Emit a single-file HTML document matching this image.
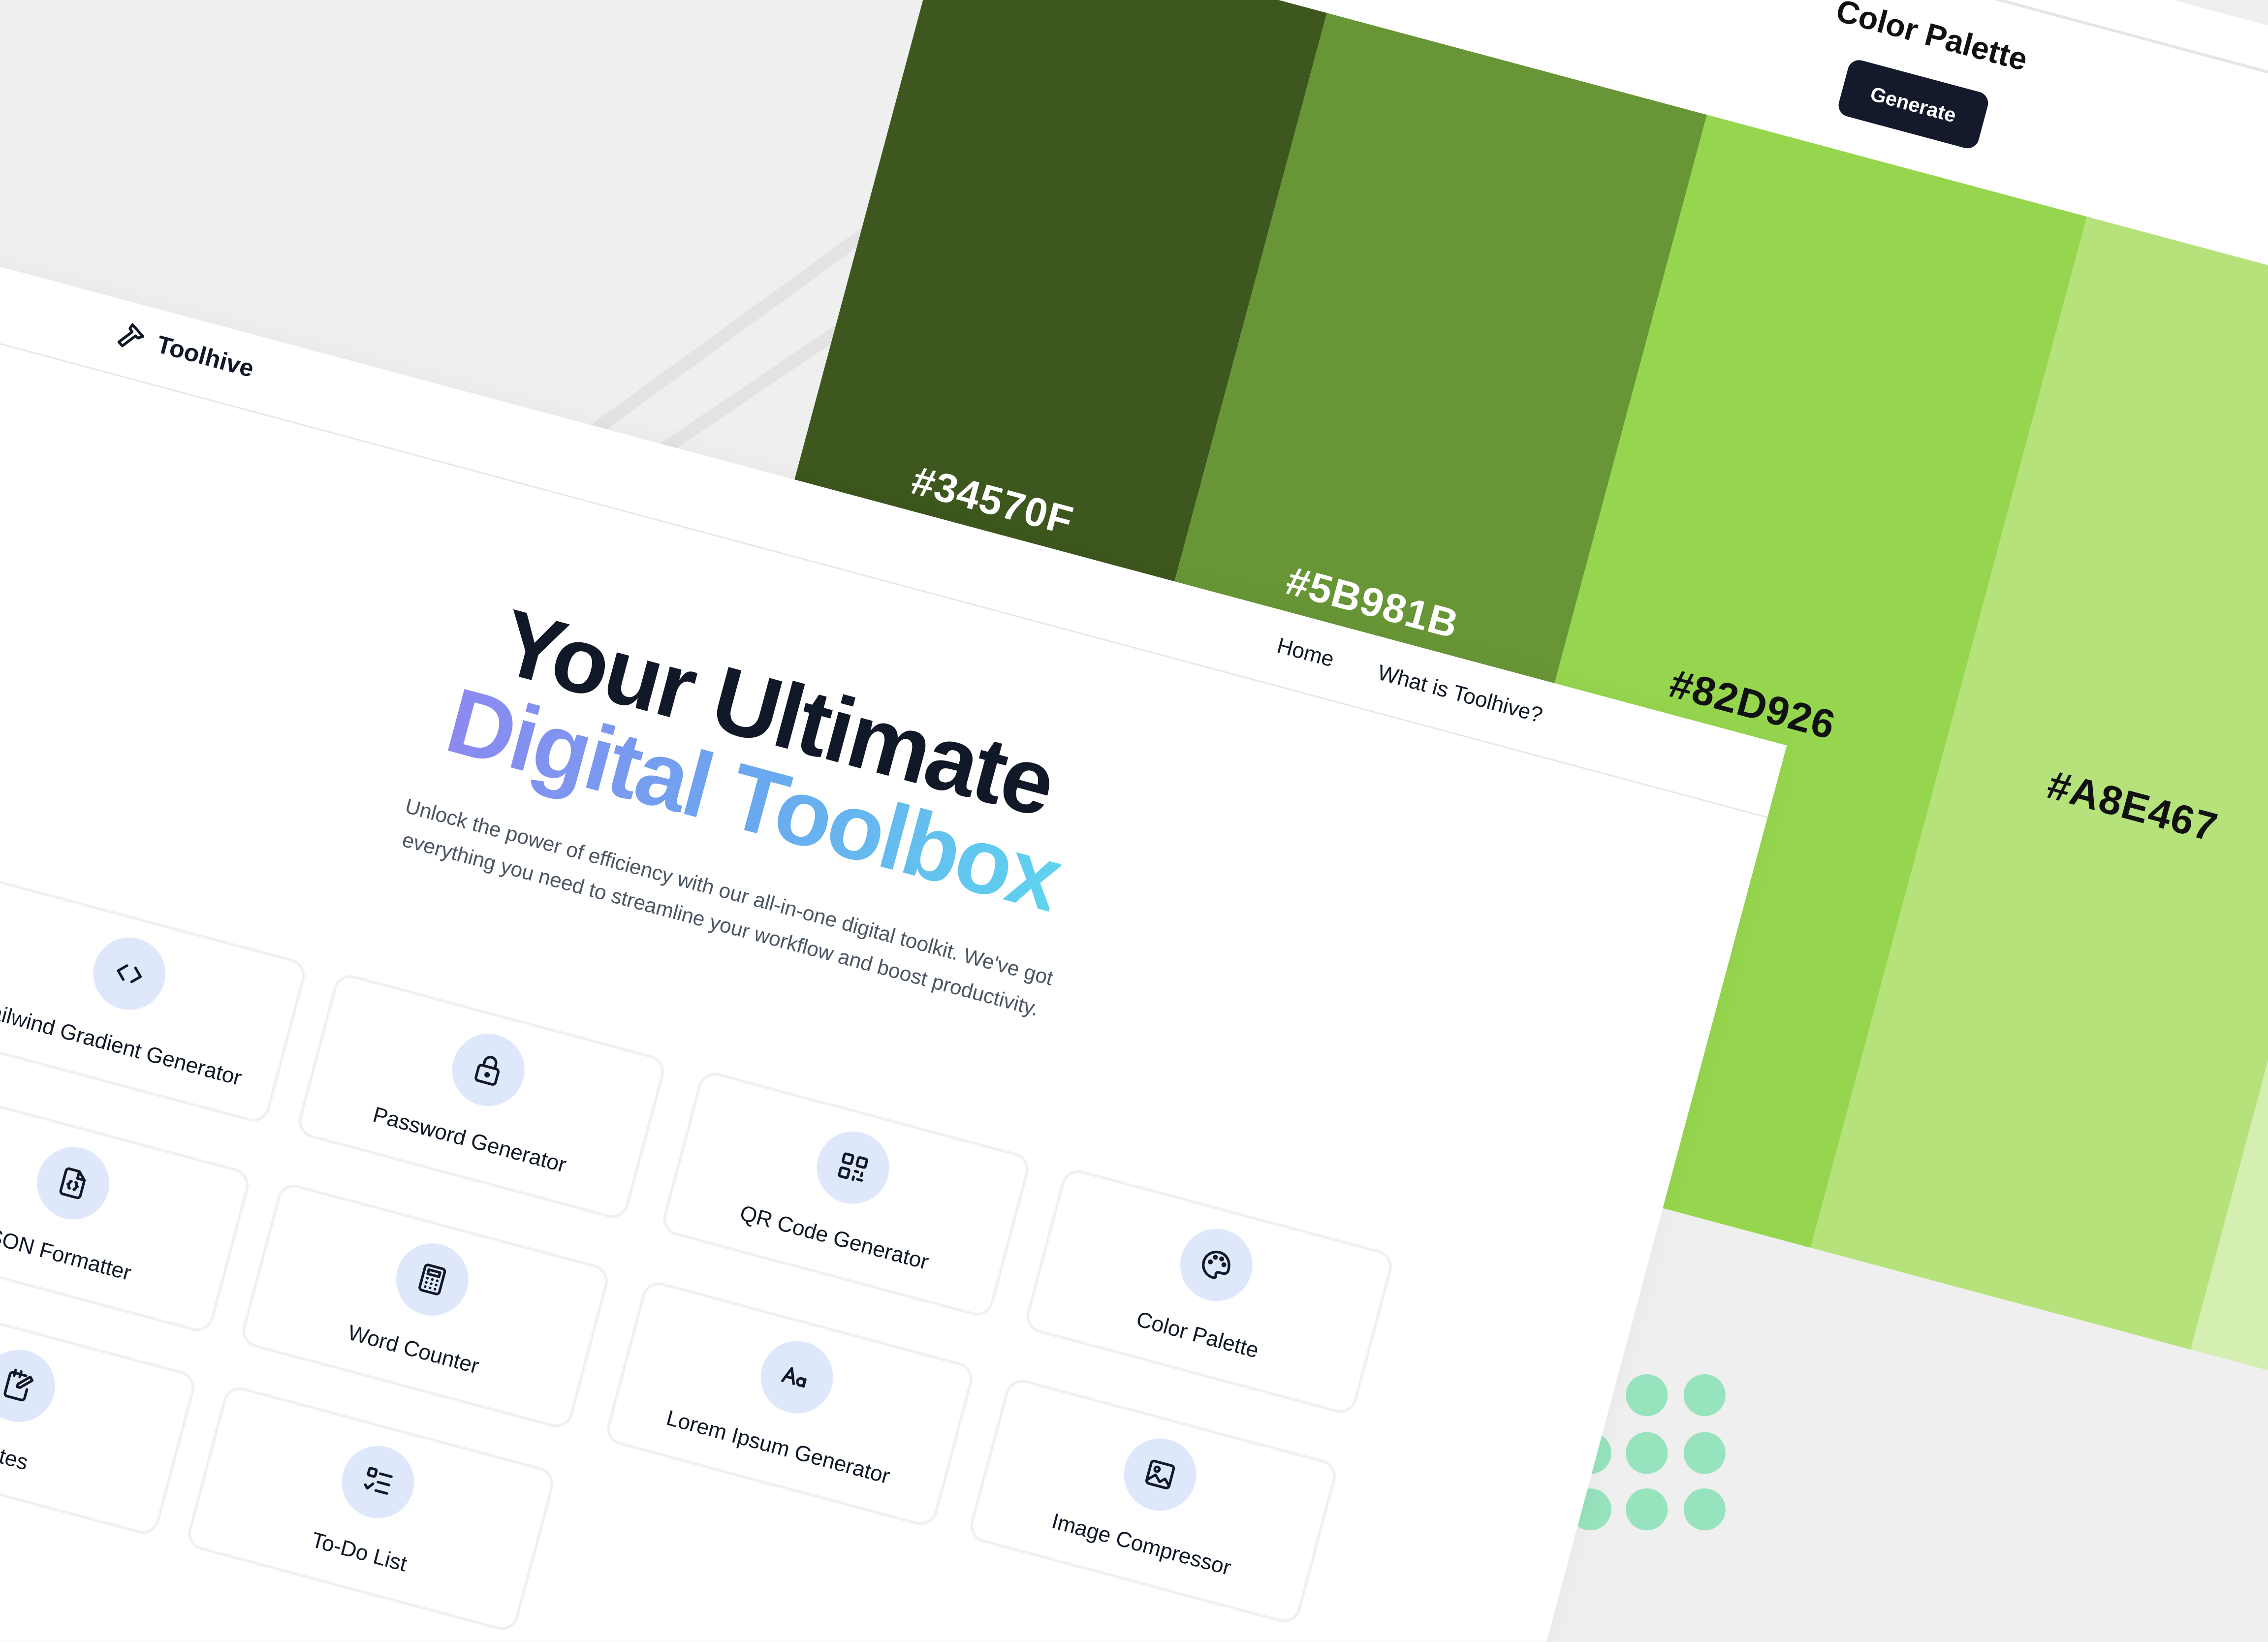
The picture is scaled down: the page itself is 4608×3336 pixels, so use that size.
<!DOCTYPE html>
<html><head><meta charset="utf-8"><style>
*{margin:0;padding:0;box-sizing:border-box}
html,body{width:4608px;height:3336px;overflow:hidden;background:#efefef}
#stage{position:absolute;left:0;top:0;width:1568px;height:1135px;transform:scale(2.93878);transform-origin:0 0;overflow:hidden;background:#efefef;font-family:"Liberation Sans",sans-serif}
.back{position:absolute;left:695.6px;top:-216.5px;width:1360px;height:898px;transform:rotate(15deg);transform-origin:0 0;background:#fff}
.col{position:absolute;top:160px;height:738px;width:272px}
.hex{position:absolute;left:0;width:272px;top:370px;text-align:center;font-weight:700;font-size:28px;letter-spacing:0.5px}
.front{position:absolute;left:-117px;top:153px;width:1400px;height:1150px;transform:rotate(15deg);transform-origin:0 0;background:#fff;box-shadow:0 0 20px rgba(0,0,0,.04)}
.hdr{position:absolute;left:0;top:0;width:1400px;height:52px;border-bottom:1.5px solid #e6e6ea}
.card{position:absolute;width:236px;height:116px;border:2.5px solid #f1f1f3;border-radius:12px;background:#fff}
.ic{position:absolute;left:91px;top:12px;width:50px;height:50px;border-radius:50%;background:#dfe8fb;display:flex;align-items:center;justify-content:center}
.ic svg{width:24px;height:24px;fill:none;stroke:#111827;stroke-width:1.8;stroke-linecap:round;stroke-linejoin:round}
.lbl{position:absolute;left:-20px;right:-20px;top:79px;text-align:center;font-size:15px;font-weight:500;color:#111827;white-space:nowrap}
.dot{position:absolute;width:29px;height:29px;border-radius:50%;background:#97e3bd}
</style></head><body><div id="stage">
<svg style="position:absolute;left:0;top:0" width="1568" height="1135"><g stroke="#e3e3e3" stroke-width="9"><line x1="380" y1="320" x2="600" y2="160"/><line x1="430" y1="330" x2="600" y2="215"/></g></svg>
<div class="dot" style="left:1085px;top:990px"></div><div class="dot" style="left:1085px;top:1029px"></div>
<div class="dot" style="left:1124px;top:950px"></div><div class="dot" style="left:1164px;top:950px"></div>
<div class="dot" style="left:1124px;top:990px"></div><div class="dot" style="left:1164px;top:990px"></div>
<div class="dot" style="left:1124px;top:1029px"></div><div class="dot" style="left:1164px;top:1029px"></div>
<div class="back">
<div style="position:absolute;left:0;top:30px;width:1360px;height:1.5px;background:#e6e6ea"></div>
<div style="position:absolute;left:560px;top:54px;width:240px;text-align:center;font-weight:700;font-size:22px;color:#111">Color Palette</div>
<div style="position:absolute;left:630px;top:96px;width:100px;height:40px;border-radius:8px;background:#141a2b;color:#fff;font-size:14px;font-weight:600;text-align:center;line-height:40px">Generate</div>
<div class="col" style="left:0;background:#3d571e"><div class="hex" style="color:#fff">#34570F</div></div>
<div class="col" style="left:272px;background:#689636"><div class="hex" style="color:#fff">#5B981B</div></div>
<div class="col" style="left:544px;background:#96d64e"><div class="hex" style="color:#111">#82D926</div></div>
<div class="col" style="left:816px;background:#b6e27c"><div class="hex" style="color:#111">#A8E467</div></div>
<div class="col" style="left:1088px;background:#d5efb2"></div>
</div>
<div class="front">
<div class="hdr">
<svg style="position:absolute;left:210px;top:12px" width="24" height="24" viewBox="0 0 24 24" fill="none" stroke="#111827" stroke-width="1.9" stroke-linejoin="round"><path d="M10 3l9 6-3 2-2-1-7 9-3-2 7-9-2-2z"/></svg>
<div style="position:absolute;left:240px;top:14px;font-size:17px;font-weight:700;color:#111827">Toolhive</div>
<div style="position:absolute;left:1042px;top:16px;font-size:15px;color:#111827">Home</div>
<div style="position:absolute;left:1114px;top:16px;font-size:15px;color:#111827">What is Toolhive?</div>
</div>
<div style="position:absolute;left:420px;width:600px;top:128px;text-align:center;font-weight:800;font-size:64px;line-height:62px;letter-spacing:-1.5px;color:#111827">Your Ultimate<br><span style="background:linear-gradient(90deg,#8c89f0,#6aa8ef 50%,#5fd3ef);-webkit-background-clip:text;background-clip:text;color:transparent">Digital Toolbox</span></div>
<div style="position:absolute;left:460px;width:520px;top:277px;text-align:center;font-size:14.4px;line-height:23px;color:#4b5563">Unlock the power of efficiency with our all-in-one digital toolkit. We've got everything you need to streamline your workflow and boost productivity.</div>

<div class="card" style="left:216px;top:410px"><div class="ic"><svg viewBox="0 0 24 24"><path d="M9 7l-5 5 5 5M15 7l5 5-5 5"/></svg></div><div class="lbl">Tailwind Gradient Generator</div></div>
<div class="card" style="left:473px;top:410px"><div class="ic"><svg viewBox="0 0 24 24"><rect x="5" y="10" width="14" height="11" rx="2"/><path d="M8 10V7a4 4 0 018 0v3"/><circle cx="12" cy="15.5" r="1"/></svg></div><div class="lbl">Password Generator</div></div>
<div class="card" style="left:734px;top:410px"><div class="ic"><svg viewBox="0 0 24 24"><rect x="4" y="4" width="6" height="6" rx="1"/><rect x="14" y="4" width="6" height="6" rx="1"/><rect x="4" y="14" width="6" height="6" rx="1"/><path d="M14 14h2M19 14v2M14 18v2M17 19h3"/></svg></div><div class="lbl">QR Code Generator</div></div>
<div class="card" style="left:994px;top:410px"><div class="ic"><svg viewBox="0 0 24 24"><path d="M12 3a9 9 0 000 18c1.5 0 2-1 1.5-2s0-2.5 1.5-2.5H18a3 3 0 003-3C21 7 17 3 12 3z"/><circle cx="7.5" cy="11" r=".8"/><circle cx="10" cy="7" r=".8"/><circle cx="14.5" cy="7" r=".8"/><circle cx="17" cy="10.5" r=".8"/></svg></div><div class="lbl">Color Palette</div></div>

<div class="card" style="left:216px;top:560px"><div class="ic"><svg viewBox="0 0 24 24"><path d="M14 3H7a2 2 0 00-2 2v14a2 2 0 002 2h10a2 2 0 002-2V8z"/><path d="M14 3v5h5M10.5 11c-1 0-1 .8-1 1.5s-.5 1-1 1c.5 0 1 .3 1 1s0 1.5 1 1.5M13.5 11c1 0 1 .8 1 1.5s.5 1 1 1c-.5 0-1 .3-1 1s0 1.5-1 1.5"/></svg></div><div class="lbl">JSON Formatter</div></div>
<div class="card" style="left:473px;top:560px"><div class="ic"><svg viewBox="0 0 24 24"><rect x="5" y="3" width="14" height="18" rx="2"/><rect x="8" y="6" width="8" height="3"/><path d="M8.5 12h.1M12 12h.1M15.5 12h.1M8.5 15h.1M12 15h.1M15.5 15h.1M8.5 18h.1M12 18h.1M15.5 18h.1"/></svg></div><div class="lbl">Word Counter</div></div>
<div class="card" style="left:734px;top:560px"><div class="ic"><svg viewBox="0 0 24 24"><path d="M3 17l4-10 4 10M4.5 13.5h5"/><path d="M18 12v5M18 14.5a2.5 2.5 0 10-2.5 2.5 2.5 2.5 0 002.5-2.5z" /></svg></div><div class="lbl">Lorem Ipsum Generator</div></div>
<div class="card" style="left:994px;top:560px"><div class="ic"><svg viewBox="0 0 24 24"><rect x="4" y="4" width="16" height="16" rx="2"/><circle cx="9" cy="9" r="1.6"/><path d="M4 18l5-5 4 4 3-3 4 4"/></svg></div><div class="lbl">Image Compressor</div></div>

<div class="card" style="left:216px;top:705px"><div class="ic"><svg viewBox="0 0 24 24"><path d="M15 4H6a2 2 0 00-2 2v13a2 2 0 002 2h10a2 2 0 002-2v-6"/><path d="M7 2v4M11 2v4M18 4l2 2-7 7h-2v-2z"/></svg></div><div class="lbl">Notes</div></div>
<div class="card" style="left:473px;top:705px"><div class="ic"><svg viewBox="0 0 24 24"><rect x="4" y="4" width="5" height="5" rx="1"/><path d="M4 16l2 2 3-4M12 6h8M12 12h8M12 18h8"/></svg></div><div class="lbl">To-Do List</div></div>
</div>
</div></body></html>
